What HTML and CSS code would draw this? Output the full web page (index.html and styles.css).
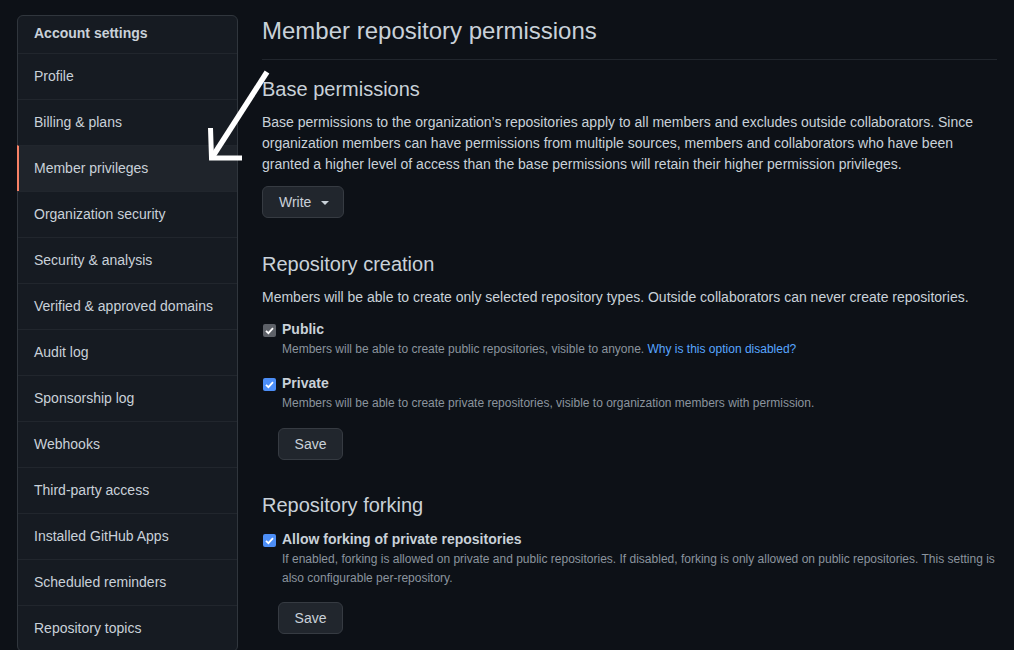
FILE: index.html
```html
<!DOCTYPE html>
<html>
<head>
<meta charset="utf-8">
<link rel="stylesheet" href="styles.css">
</head>
<body>
<div class="layout">
  <nav class="menu">
    <div class="menu-heading">Account settings</div>
    <a class="menu-item">Profile</a>
    <a class="menu-item">Billing &amp; plans</a>
    <a class="menu-item selected">Member privileges</a>
    <a class="menu-item">Organization security</a>
    <a class="menu-item">Security &amp; analysis</a>
    <a class="menu-item">Verified &amp; approved domains</a>
    <a class="menu-item">Audit log</a>
    <a class="menu-item">Sponsorship log</a>
    <a class="menu-item">Webhooks</a>
    <a class="menu-item">Third-party access</a>
    <a class="menu-item">Installed GitHub Apps</a>
    <a class="menu-item">Scheduled reminders</a>
    <a class="menu-item">Repository topics</a>
  </nav>
  <main class="content">
    <h1 class="page-title">Member repository permissions</h1>

    <h2 class="section-title first">Base permissions</h2>
    <p class="lead">Base permissions to the organization’s repositories apply to all members and excludes outside collaborators. Since organization members can have permissions from multiple sources, members and collaborators who have been granted a higher level of access than the base permissions will retain their higher permission privileges.</p>
    <button class="btn btn-write">Write <span class="caret"></span></button>

    <h2 class="section-title">Repository creation</h2>
    <p class="lead">Members will be able to create only selected repository types. Outside collaborators can never create repositories.</p>
    <div class="check">
      <span class="box disabled"><svg viewBox="0 0 13 13" width="13" height="13"><path d="M3 6.8l2.4 2.4L10 4.2" fill="none" stroke="#fff" stroke-width="1.8"/></svg></span>
      <div class="check-body">
        <div class="check-label">Public</div>
        <div class="note">Members will be able to create public repositories, visible to anyone. <a class="link">Why is this option disabled?</a></div>
      </div>
    </div>
    <div class="check">
      <span class="box"><svg viewBox="0 0 13 13" width="13" height="13"><path d="M3 6.8l2.4 2.4L10 4.2" fill="none" stroke="#fff" stroke-width="1.8"/></svg></span>
      <div class="check-body">
        <div class="check-label">Private</div>
        <div class="note">Members will be able to create private repositories, visible to organization members with permission.</div>
      </div>
    </div>
    <button class="btn btn-save">Save</button>

    <h2 class="section-title forking">Repository forking</h2>
    <div class="check fork">
      <span class="box"><svg viewBox="0 0 13 13" width="13" height="13"><path d="M3 6.8l2.4 2.4L10 4.2" fill="none" stroke="#fff" stroke-width="1.8"/></svg></span>
      <div class="check-body">
        <div class="check-label">Allow forking of private repositories</div>
        <div class="note tall">If enabled, forking is allowed on private and public repositories. If disabled, forking is only allowed on public repositories. This setting is also configurable per-repository.</div>
      </div>
    </div>
    <button class="btn btn-save last">Save</button>
  </main>
</div>
<svg class="arrow" width="80" height="110" viewBox="0 0 80 110">
  <path d="M62 12 L8 96" stroke="#fff" stroke-width="5.5" fill="none"/>
  <path d="M5.5 68 L6.5 98 L37 98" stroke="#fff" stroke-width="5" fill="none"/>
</svg>
</body>
</html>
```

FILE: styles.css
```css
* { box-sizing: border-box; }
html, body { margin: 0; padding: 0; background: #0d1117; }
body {
  font-family: "Liberation Sans", Arial, sans-serif;
  font-size: 14px;
  line-height: 21px;
  color: #c9d1d9;
  height: 650px;
  overflow: hidden;
  position: relative;
}
.layout {
  display: flex;
  gap: 24px;
  padding: 15px 17px 0 17px;
}
.menu {
  width: 221px;
  flex: none;
  background: #161b22;
  border: 1px solid #30363d;
  border-radius: 6px;
  display: flex;
  flex-direction: column;
}
.menu-heading {
  padding: 7px 16px 9px 16px;
  font-weight: bold;
  line-height: 21px;
  color: #c9d1d9;
  border-bottom: 1px solid #21262d;
}
.menu-item {
  display: block;
  padding: 12px 16px 12px 16px;
  line-height: 21px;
  color: #c9d1d9;
  border-top: 1px solid #21262d;
}
.menu-heading + .menu-item { border-top: none; }
.menu-item.selected {
  background: #1f242b;
  border-left: 2px solid #f78166;
  margin-left: -1px;
  padding-left: 15px;
}
.content {
  flex: 1;
  min-width: 0;
}
.page-title {
  margin: 0;
  font-size: 24px;
  font-weight: normal;
  line-height: 32px;
  padding-bottom: 12px;
  border-bottom: 1px solid #21262d;
  color: #c9d1d9;
}
.section-title {
  margin: 31px 0 8px 0;
  font-size: 20px;
  font-weight: normal;
  line-height: 30px;
  color: #c9d1d9;
}
.section-title.first { margin-top: 14px; }
.section-title.forking { margin-top: 30px; }
.lead { margin: 0; line-height: 21px; }
.btn {
  display: inline-flex;
  align-items: center;
  font-family: inherit;
  font-size: 14px;
  line-height: 20px;
  color: #c9d1d9;
  background: #21262d;
  border: 1px solid #363b42;
  border-radius: 6px;
  padding: 5px 16px;
  height: 32px;
}
.btn-write { margin-top: 11px; padding-left: 16px; padding-right: 15px; width: 82px; }
.caret {
  display: inline-block;
  width: 0; height: 0;
  border-left: 4px solid transparent;
  border-right: 4px solid transparent;
  border-top: 4px solid #c9d1d9;
  margin-left: 10px;
  margin-top: 1px;
}
.btn-save { margin-left: 16px; margin-top: 16px; width: 65px; justify-content: center; }
.btn-save.last { margin-top: 14px; }
.check {
  display: flex;
  gap: 6px;
  margin-top: 11px;
}
.check + .check { margin-top: 15px; }
.box {
  flex: none;
  width: 13px;
  height: 13px;
  margin-top: 5px;
  margin-left: 1px;
  border-radius: 2px;
  background: #4c8ef7;
  display: flex;
}
.box.disabled { background: #5d6168; }
.check-label {
  font-weight: bold;
  line-height: 21px;
}
.note {
  font-size: 12px;
  line-height: 18px;
  color: #8b949e;
}
.note.tall { line-height: 19px; }
.link { color: #58a6ff; }
.fork { margin-top: 9px; }
.arrow {
  position: absolute;
  left: 205px;
  top: 60px;
}
```
